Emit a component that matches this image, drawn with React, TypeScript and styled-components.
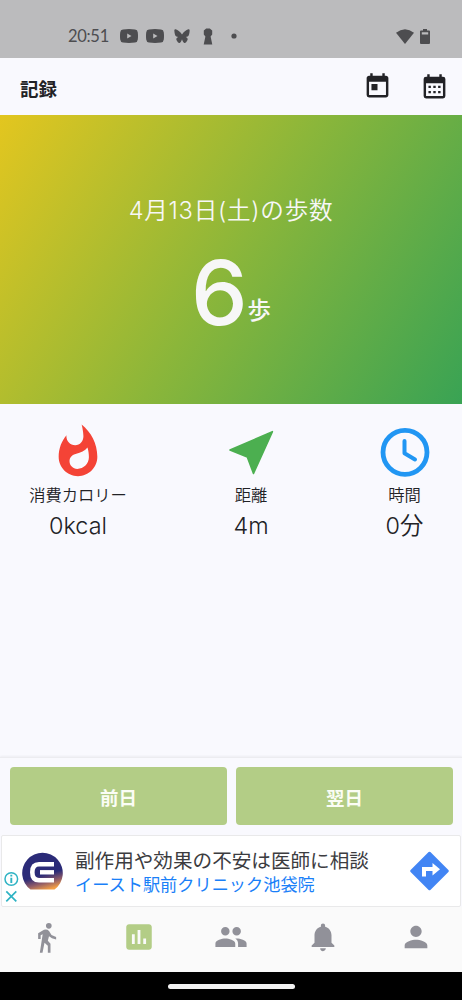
import React from "react";
import styled, { createGlobalStyle } from "styled-components";
import {
  MdAssessment,
  MdNotifications,
  MdPeople,
  MdPerson,
  MdToday,
  MdWhatshot,
} from "react-icons/md";

const GlobalStyle = createGlobalStyle`
  * { box-sizing: border-box; }
  body {
    margin: 0;
    background: #000;
    font-family: Inter, "Noto Sans CJK JP", sans-serif;
  }
`;

const Screen = styled.div`
  width: 462px;
  height: 1000px;
  display: flex;
  flex-direction: column;
  overflow: hidden;
  background: #f9f9fe;
  color: #222226;
`;

const StatusBar = styled.div`
  height: 58px;
  flex: none;
  padding: 14px 32px 0 68px;
  display: flex;
  align-items: center;
  background: #bbbbbd;
  color: #4d4d50;
`;

const Clock = styled.span`
  width: 52px;
  font: 400 16.5px/20px Lato, sans-serif;
  letter-spacing: -0.3px;
`;

const StatusIcons = styled.div`
  display: flex;
  align-items: center;
  flex: 1;
`;

const Glyph = styled.svg<{ $ml?: number; $mt?: number }>`
  display: block;
  flex: none;
  margin-left: ${(p) => p.$ml ?? 0}px;
  margin-top: ${(p) => p.$mt ?? 0}px;
`;

const AppBar = styled.header`
  height: 57px;
  flex: none;
  padding: 0 13px 0 20px;
  display: flex;
  align-items: center;
`;

const Title = styled.h1`
  flex: 1;
  margin: 2px 0 0;
  font: 700 18.5px/28px "Noto Sans CJK JP", sans-serif;
`;

const BarActions = styled.div`
  display: flex;
  gap: 28px;
`;

const Hero = styled.section`
  height: 289px;
  flex: none;
  display: flex;
  flex-direction: column;
  align-items: center;
  background: linear-gradient(122deg, #e3c61f 0%, #8bb63a 50%, #39a354 100%);
  color: #f7f7f7;
`;

const HeroDate = styled.div`
  margin-top: 78px;
  font: 350 23.6px/36px Inter, "Noto Sans CJK JP", sans-serif;
  letter-spacing: 0.75px;
  white-space: nowrap;
`;

const HeroCount = styled.div`
  margin-top: 16px;
  display: flex;
  align-items: flex-start;
`;

const CountNumber = styled.span`
  font: 500 90px/96px Inter, sans-serif;
`;

const CountUnit = styled.span`
  margin-top: 46px;
  font: 500 23.5px/36px "Noto Sans CJK JP", sans-serif;
`;

const Stats = styled.section`
  flex: 1;
  display: grid;
  grid-template-columns: 156px 190px 117px;
  align-items: start;
  padding-top: 19px;
`;

const Stat = styled.div`
  display: flex;
  flex-direction: column;
  align-items: center;
  svg { display: block; }
`;

const StatLabel = styled.div`
  margin-top: 1px;
  font: 350 16.3px/24px "Noto Sans CJK JP", sans-serif;
  white-space: nowrap;
`;

const StatValue = styled.div`
  margin-top: 2px;
  font: 350 23.4px/36px Inter, "Noto Sans CJK JP", sans-serif;
`;

const Pager = styled.div`
  height: 78px;
  flex: none;
  padding: 9px 9px 10px 10px;
  display: grid;
  grid-template-columns: 1fr 1fr;
  gap: 9px;
  border-top: 1px solid #ececf0;
  box-shadow: 0 -1px 2px rgba(0, 0, 0, 0.05);
`;

const PagerButton = styled.button`
  border: 0;
  padding: 2px 0 0;
  border-radius: 4px;
  background: #b3cd86;
  color: #fbfdf5;
  font: 700 18.5px/28px "Noto Sans CJK JP", sans-serif;
`;

const Ad = styled.aside`
  height: 72px;
  flex: none;
  display: flex;
  align-items: center;
  margin: 0 1px;
  border: 1px solid #e9e9ea;
  border-radius: 2px;
  background: #fff;
`;

const AdChoices = styled.div`
  width: 20px;
  align-self: flex-end;
  padding: 0 0 2px 2px;
  svg { display: block; }
`;

const AdText = styled.div`
  flex: 1;
  margin: 1px 0 0 12px;
  white-space: nowrap;
  font-family: "Noto Sans CJK JP", sans-serif;
`;

const AdHeadline = styled.div`
  font-size: 19.6px;
  line-height: 24px;
  color: #3c3c3f;
`;

const AdAdvertiser = styled.div`
  font-size: 17.2px;
  line-height: 24px;
  color: #1a80f8;
`;

const TabBar = styled.nav`
  height: 65px;
  flex: none;
  display: grid;
  grid-template-columns: repeat(5, 1fr);
  padding-bottom: 5px;
  background: #fafafa;
`;

const Tab = styled.a<{ $active?: boolean }>`
  display: flex;
  justify-content: center;
  align-items: center;
  color: ${(p) => (p.$active ? "#b3cd86" : "#919199")};
`;

const GestureBar = styled.div`
  height: 28px;
  flex: none;
  display: flex;
  justify-content: center;
  padding-top: 12px;
  background: #000;
`;

const GesturePill = styled.div`
  width: 127px;
  height: 5px;
  border-radius: 3px;
  background: #f2f2f2;
`;

const VideoIcon = ({ ml }: { ml?: number }) => (
  <Glyph width="18" height="14" viewBox="0 0 18 14" $ml={ml}>
    <path fill="currentColor" fillRule="evenodd" d="M3 .5Q9-.3 15 .5Q17.6.8 17.8 3.4Q18.2 7 17.8 10.600Q17.600 13.200 15 13.500Q9 14.300 3 13.500Q.4 13.200.2 10.600Q-.2 7 .2 3.400Q.4.8 3 .5ZM7.200 4.500V9.500L11.500 7Z" />
  </Glyph>
);

const WalkIcon = () => (
  <Glyph width="34" height="34" viewBox="0 0 102 102" fill="currentColor">
    <circle cx="59.400" cy="17.500" r="8.500" />
    <path d="M27.400 57V39.500L45 29.500Q54 26.500 60 33L67.500 45L81.400 51V58.500Q67 55.500 60 49L56.500 62L64.500 71V98H56.500V77L46.500 68L40.500 98H32.500L41 42.500L35 45.500V57Z" />
  </Glyph>
);

export default function App() {
  return (
    <>
      <GlobalStyle />
      <Screen>
        <StatusBar>
          <Clock>20:51</Clock>
          <StatusIcons>
            <VideoIcon />
            <VideoIcon ml={8} />
            <Glyph width="16" height="15" viewBox="0 0 16 15" $ml={10}>
              <path fill="currentColor" d="M8 5.600C6.700 3.300 3.700.9 1.700.3C.5 0 .2.8.4 2.200C.6 4.200.9 6.700 2.400 7.500C3 7.800 3.600 7.900 4.300 7.900C2.900 8.400 1.700 9.400 2.600 11.300C3.500 13.100 4.600 14.300 5.700 13.900C7 13.400 7.600 11.500 8 10.300C8.400 11.500 9 13.400 10.300 13.900C11.400 14.300 12.500 13.100 13.400 11.300C14.300 9.400 13.100 8.400 11.700 7.900C12.400 7.900 13 7.800 13.600 7.500C15.100 6.700 15.400 4.200 15.600 2.200C15.800.8 15.500 0 14.300.3C12.300.9 9.300 3.300 8 5.600Z" />
            </Glyph>
            <Glyph width="10" height="17" viewBox="0 0 10 17" $ml={13}>
              <path fill="currentColor" d="M3.200 .5H6.800L9.200 2.500V6.500L7.600 8.500L9.300 16.500H.7L2.400 8.500L.8 6.500V2.500Z" />
            </Glyph>
            <Glyph width="6" height="6" viewBox="0 0 6 6" $ml={18}>
              <circle cx="3" cy="3" r="2.600" fill="currentColor" />
            </Glyph>
          </StatusIcons>
          <Glyph width="18" height="15" viewBox="0 0 18 15">
            <path fill="currentColor" d="M0 3.800Q9-3.400 18 3.800L9 15Z" />
          </Glyph>
          <Glyph width="10" height="15" viewBox="0 0 10 15" $ml={6}>
            <path fill="currentColor" fillRule="evenodd" d="M3 0H7V1.500H9Q10 1.500 10 2.500V14Q10 15 9 15H1Q0 15 0 14V2.500Q0 1.500 1 1.500H3ZM1.800 3.300V5.600H8.200V3.300Z" />
          </Glyph>
        </StatusBar>

        <AppBar>
          <Title>記録</Title>
          <BarActions>
            <MdToday size={29} />
            <Glyph width="29" height="29" viewBox="0 0 24 24" $mt={1}>
              <path fill="currentColor" fillRule="evenodd" d="M19 3h-1V1h-2v2H8V1H6v2H5a2 2 0 0 0-2 2v14a2 2 0 0 0 2 2h14a2 2 0 0 0 2-2V5a2 2 0 0 0-2-2zm0 16H5V8.500h14zM7 10.500h2v2H7zm4 0h2v2h-2zm4 0h2v2h-2zM7 14.800h2v2H7zm4 0h2v2h-2zm4 0h2v2h-2z" />
            </Glyph>
          </BarActions>
        </AppBar>

        <Hero>
          <HeroDate>4月13日(土)の歩数</HeroDate>
          <HeroCount>
            <CountNumber>6</CountNumber>
            <CountUnit>歩</CountUnit>
          </HeroCount>
        </Hero>

        <Stats>
          <Stat>
            <MdWhatshot size={58} color="#f44336" />
            <StatLabel>消費カロリー</StatLabel>
            <StatValue>0kcal</StatValue>
          </Stat>
          <Stat>
            <svg width="58" height="58" viewBox="0 0 58 58">
              <path d="M50.400 8.700L31.500 50.400L25.300 34L8 27Z" fill="#4caf50" stroke="#4caf50" strokeWidth="1.600" strokeLinejoin="round" />
            </svg>
            <StatLabel>距離</StatLabel>
            <StatValue>4m</StatValue>
          </Stat>
          <Stat>
            <svg width="58" height="58" viewBox="0 0 58 58" fill="none" stroke="#2196f3">
              <circle cx="29" cy="29.300" r="22" strokeWidth="4.800" />
              <path d="M28.500 18V30.200L39 36.500" strokeWidth="4" strokeLinecap="round" strokeLinejoin="round" />
            </svg>
            <StatLabel>時間</StatLabel>
            <StatValue>0分</StatValue>
          </Stat>
        </Stats>

        <Pager>
          <PagerButton>前日</PagerButton>
          <PagerButton>翌日</PagerButton>
        </Pager>

        <Ad>
          <AdChoices>
            <svg width="15" height="33" viewBox="0 0 15 33" fill="none" stroke="#2fb3c4" strokeWidth="1.500">
              <circle cx="7.300" cy="8" r="6.300" />
              <path d="M7.300 6.800V12M7.300 3.800V5.500" strokeWidth="1.900" />
              <path d="M2.300 20.300L12.300 30.300M12.300 20.300L2.300 30.300" strokeWidth="1.700" />
            </svg>
          </AdChoices>
          <svg width="41" height="41" viewBox="0 0 41 41">
            <defs>
              <linearGradient id="dusk" x1="0.35" y1="0" x2="0.65" y2="1">
                <stop offset="0.6" stopColor="#2b2b78" />
                <stop offset="0.8" stopColor="#8d5a68" />
                <stop offset="1" stopColor="#f5a044" />
              </linearGradient>
            </defs>
            <path d="M8.500 38.500A20.300 20.300 0 1 1 32.500 38.500Z" fill="url(#dusk)" />
            <path d="M32 13.300H17Q10.300 13.300 10.300 21.300Q10.300 29.300 17 29.300H32" fill="none" stroke="#fff" strokeWidth="4.600" />
            <path d="M32 21.300H18" stroke="#fff" strokeWidth="4.400" />
          </svg>
          <AdText>
            <AdHeadline>副作用や効果の不安は医師に相談</AdHeadline>
            <AdAdvertiser>イースト駅前クリニック池袋院</AdAdvertiser>
          </AdText>
          <Glyph width="50" height="40" viewBox="0 0 50 40">
            <path d="M19.500 2L37.500 20L19.500 38L1.500 20Z" fill="#4285f4" stroke="#4285f4" strokeWidth="2.500" strokeLinejoin="round" />
            <path d="M12 25.500V16H22.500V12L30 18.300L22.500 24.500V20H16V25.500Z" fill="#fff" />
          </Glyph>
        </Ad>

        <TabBar>
          <Tab><WalkIcon /></Tab>
          <Tab $active><MdAssessment size={34} /></Tab>
          <Tab><MdPeople size={34} /></Tab>
          <Tab><MdNotifications size={34} /></Tab>
          <Tab><MdPerson size={34} /></Tab>
        </TabBar>
        <GestureBar><GesturePill /></GestureBar>
      </Screen>
    </>
  );
}
